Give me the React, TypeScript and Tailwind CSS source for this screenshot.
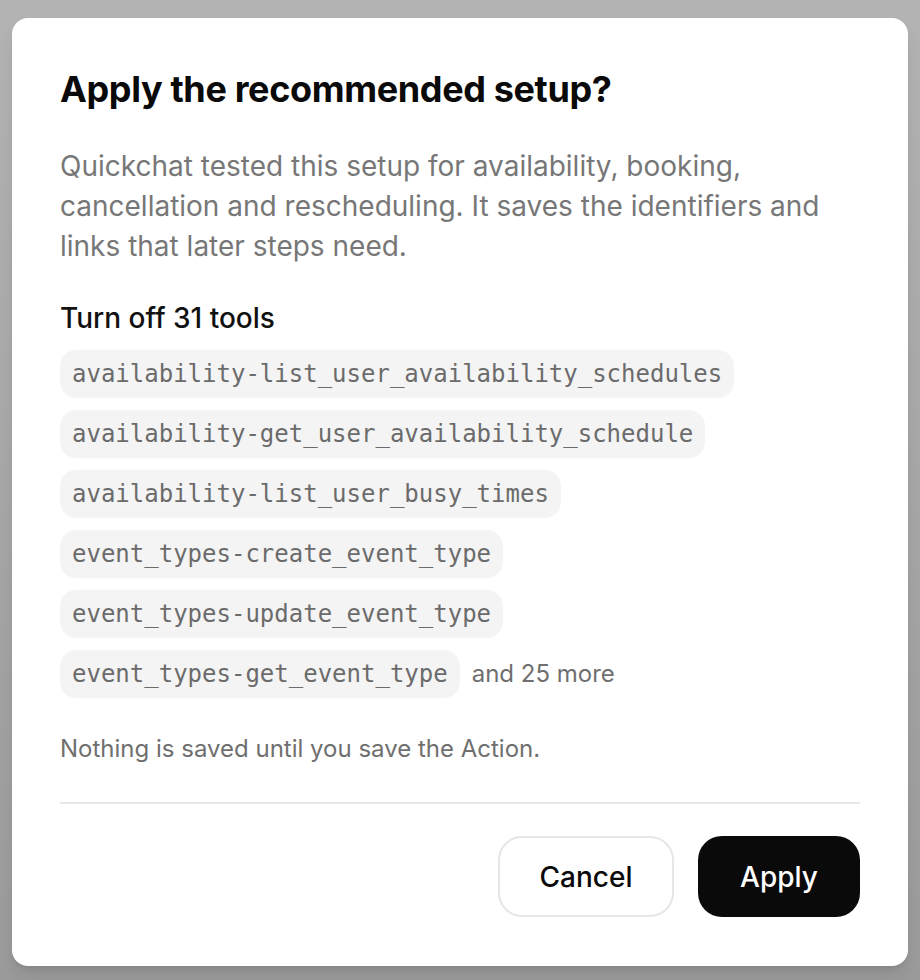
import React from 'react';

const tools = [
  'availability-list_user_availability_schedules',
  'availability-get_user_availability_schedule',
  'availability-list_user_busy_times',
  'event_types-create_event_type',
  'event_types-update_event_type',
  'event_types-get_event_type',
];

const ToolChip: React.FC<{ name: string }> = ({ name }) => (
  <span className="inline-block rounded-[16px] bg-[#f4f4f4] px-3 py-[9px] font-['DejaVu_Sans_Mono',monospace] text-[24px] leading-[30px] text-[#6b6b6b]">
    {name}
  </span>
);

export default function App() {
  return (
    <div className="min-h-[980px] bg-gradient-to-b from-[#b3b3b3] to-[#9a9a9a] pt-[18px] px-3 font-['Inter',sans-serif]">
      <div className="w-[896px] h-[948px] rounded-2xl bg-white px-12 pt-[49px] shadow-lg">
        <h2 className="text-[36px] font-bold leading-[44px] text-[#0a0a0a] tracking-[-0.01em]">
          Apply the recommended setup?
        </h2>

        <p className="mt-[35px] text-[28px] leading-[40px] text-[#777777]">
          Quickchat tested this setup for availability, booking, cancellation and rescheduling. It saves the identifiers and links that later steps need.
        </p>

        <h3 className="mt-[34px] text-[28px] font-medium leading-[36px] text-[#111111]">
          Turn off 31 tools
        </h3>

        <div className="mt-[14px] flex flex-col items-start gap-3">
          {tools.map((t, i) => (
            <div key={t} className="flex items-center gap-3">
              <ToolChip name={t} />
              {i === tools.length - 1 && (
                <span className="text-[24px] text-[#6f6f6f]">and 25 more</span>
              )}
            </div>
          ))}
        </div>

        <p className="mt-[35px] text-[24px] leading-[32px] text-[#6f6f6f]">
          Nothing is saved until you save the Action.
        </p>

        <div className="mt-[37px] border-t-2 border-[#e8e8e8]" />

        <div className="mt-[32px] flex justify-end gap-6">
          <button className="h-[81px] w-[176px] rounded-[24px] border-2 border-[#e6e6e6] bg-white text-[28px] font-medium text-[#0a0a0a]">
            Cancel
          </button>
          <button className="h-[81px] w-[162px] rounded-[24px] bg-[#0a0a0a] text-[28px] font-medium text-white">
            Apply
          </button>
        </div>
      </div>
    </div>
  );
}
